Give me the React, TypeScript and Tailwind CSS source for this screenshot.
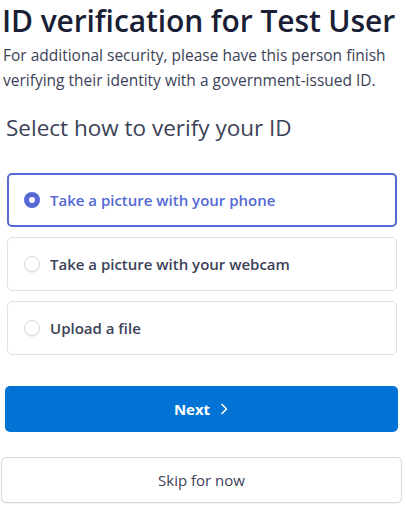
import React from "react";

const options = [
  "Take a picture with your phone",
  "Take a picture with your webcam",
  "Upload a file",
];

export default function App() {
  const selected = 0;
  return (
    <div
      className="w-[406px] h-[507px] bg-white overflow-hidden text-[#1a1f36]"
      style={{ fontFamily: '"Open Sans", "Noto Sans", sans-serif' }}
    >
      <h1 className="pl-[2px] text-[30px] leading-[41px] font-semibold text-[#1a1f36] tracking-[-0.1px] whitespace-nowrap">
        ID verification for Test User
      </h1>
      <p className="pl-[3px] mt-[2px] text-[15.5px] leading-[25px] text-[#3c4257]">
        For additional security, please have this person finish verifying their identity with a government-issued ID.
      </p>
      <h2 className="pl-[6px] mt-[20px] text-[22.5px] leading-[30px] font-normal text-[#3c4257]">
        Select how to verify your ID
      </h2>
      <div className="mt-[30px] ml-[7px] w-[390px] flex flex-col gap-[10px]">
        {options.map((o, i) => (
          <div
            key={o}
            className={
              i === selected
                ? "h-[54px] rounded-[5px] border-2 border-[#5469d4] flex items-center pl-[15px]"
                : "h-[54px] rounded-[5px] border border-[#dfe1e6] flex items-center pl-[16px]"
            }
          >
            {i === selected ? (
              <span className="w-[16px] h-[16px] rounded-full bg-[#5469d4] flex items-center justify-center">
                <span className="w-[6px] h-[6px] rounded-full bg-white" />
              </span>
            ) : (
              <span className="w-[16px] h-[16px] rounded-full border border-[#d5d8de] bg-white shadow-[0_1px_1px_rgba(0,0,0,0.08)]" />
            )}
            <span
              className={
                i === selected
                  ? "ml-[10px] text-[15px] font-semibold text-[#5469d4]"
                  : "ml-[10px] text-[15px] font-semibold text-[#3c4257]"
              }
            >
              {o}
            </span>
          </div>
        ))}
      </div>
      <button className="mt-[31px] ml-[5px] w-[393px] h-[46px] rounded-[5px] bg-[#0073d5] text-white text-[15px] font-bold flex items-center justify-center gap-[9px]">
        <span>Next</span>
        <svg width="10" height="12" viewBox="0 0 10 12" fill="none">
          <path d="M3 1.5 L7.5 6 L3 10.5" stroke="white" strokeWidth="1.6" strokeLinecap="round" strokeLinejoin="round" />
        </svg>
      </button>
      <button className="mt-[25px] ml-[1px] w-[401px] h-[46px] rounded-[5px] bg-white border border-[#d5d8de] shadow-[0_1px_1px_rgba(0,0,0,0.06)] text-[#3c4257] text-[15px] font-medium flex items-center justify-center">
        Skip for now
      </button>
    </div>
  );
}
